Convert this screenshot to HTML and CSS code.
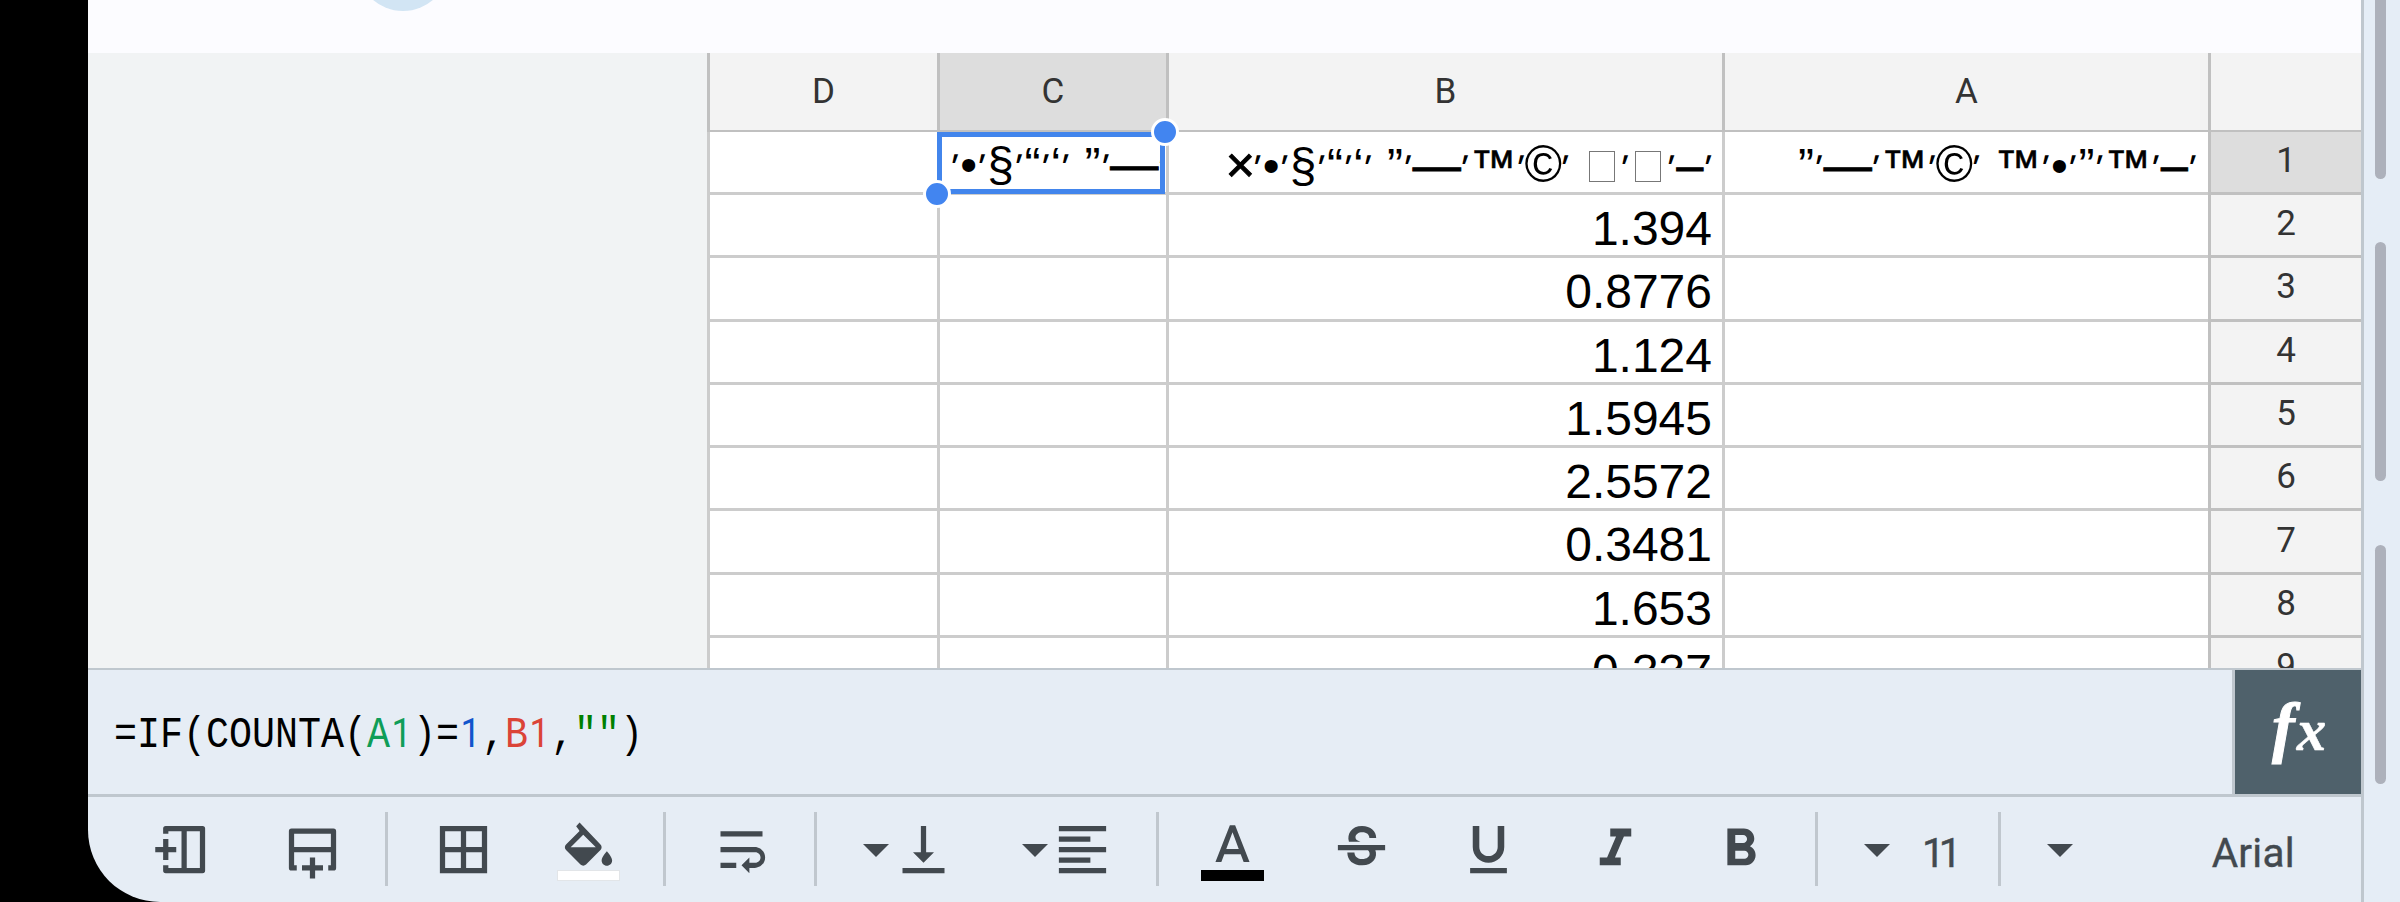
FILE: index.html
```html
<!DOCTYPE html>
<html lang="en">
<head>
<meta charset="utf-8">
<title>Spreadsheet</title>
<link rel="stylesheet" href="styles.css">
</head>
<body>
<div class="screen">
  <main class="app">
    <header class="topbar"><span class="bubble"></span></header>

    <section class="sheet">
      <div class="void"></div>
      <div class="grid">
        <div class="head">D</div><div class="head on">C</div><div class="head">B</div><div class="head">A</div><div class="head corner"></div>

        <div class="cell"></div>
        <div class="cell selected"><div class="clip c-clip"><i class="g">׳</i><i class="em">—</i><i class="g">׳</i><i class="q2">”</i><i class="sp"></i><i class="g">׳</i><i class="q1">‘</i><i class="g">׳</i><i class="q2">“</i><i class="g">׳</i><i class="se">§</i><i class="g">׳</i><i class="bu">•</i><i class="g">׳</i></div><div class="ring"></div><span class="knob start"></span><span class="knob end"></span></div>
        <div class="cell"><div class="clip b-clip"><i class="g">׳</i><i class="en">–</i><i class="g">׳</i><i class="tofu"></i><i class="g">׳</i><i class="tofu"></i><i class="sp"></i><i class="g">׳</i><i class="co">©</i><i class="g">׳</i><i class="tm">™</i><i class="g">׳</i><i class="em">—</i><i class="g">׳</i><i class="q2">”</i><i class="sp"></i><i class="g">׳</i><i class="q1">‘</i><i class="g">׳</i><i class="q2">“</i><i class="g">׳</i><i class="se">§</i><i class="g">׳</i><i class="bu">•</i><i class="g">׳</i><i class="ti">×</i></div></div>
        <div class="cell"><div class="clip"><i class="g">׳</i><i class="en">–</i><i class="g">׳</i><i class="tm">™</i><i class="g">׳</i><i class="q2">”</i><i class="g">׳</i><i class="bu">•</i><i class="g">׳</i><i class="tm">™</i><i class="sp"></i><i class="g">׳</i><i class="co">©</i><i class="g">׳</i><i class="tm">™</i><i class="g">׳</i><i class="em">—</i><i class="g">׳</i><i class="q2">”</i></div></div>
        <div class="num on">1</div>

        <div class="cell"></div><div class="cell"></div><div class="cell">1.394</div><div class="cell"></div><div class="num">2</div>
        <div class="cell"></div><div class="cell"></div><div class="cell">0.8776</div><div class="cell"></div><div class="num">3</div>
        <div class="cell"></div><div class="cell"></div><div class="cell">1.124</div><div class="cell"></div><div class="num">4</div>
        <div class="cell"></div><div class="cell"></div><div class="cell">1.5945</div><div class="cell"></div><div class="num">5</div>
        <div class="cell"></div><div class="cell"></div><div class="cell">2.5572</div><div class="cell"></div><div class="num">6</div>
        <div class="cell"></div><div class="cell"></div><div class="cell">0.3481</div><div class="cell"></div><div class="num">7</div>
        <div class="cell"></div><div class="cell"></div><div class="cell">1.653</div><div class="cell"></div><div class="num">8</div>
        <div class="cell"></div><div class="cell"></div><div class="cell">0.337</div><div class="cell"></div><div class="num">9</div>
      </div>
    </section>

    <section class="formula">
      <div class="expr"><span class="expr-text">=IF(COUNTA(<span class="green">A<b class="one">1</b></span>)=<span class="blue"><b class="one">1</b></span>,<span class="red">B<b class="one">1</b></span>,<span class="str">""</span>)</span></div>
      <div class="fx"><span class="f">f</span><span class="x">x</span></div>
    </section>

    <nav class="toolbar">
      <svg class="icon i-col line" viewBox="0 0 24 24"><path d="M6 6V4h14v16H6v-2M13 4v16M2 12h8M6 8v8"/></svg>
      <svg class="icon i-row line" viewBox="0 0 24 24"><path d="M6 19H4V5h16v14h-2M4 12h16M12 15v8M8 19h8"/></svg>
      <span class="sep s1"></span>
      <svg class="icon i-borders" viewBox="0 0 24 24"><path d="M3 3v18h18V3H3zm8 16H5v-6h6v6zm0-8H5V5h6v6zm8 8h-6v-6h6v6zm0-8h-6V5h6v6z"/></svg>
      <div class="swatch fill">
        <svg class="icon" viewBox="0 0 24 24"><path d="M16.56 8.94L8.6.6 7.3 2l1.2 1.6v.3L3.44 8.94c-.59.59-.59 1.54 0 2.12l5.5 5.5c.29.29.68.44 1.06.44s.77-.15 1.06-.44l5.5-5.5c.59-.58.59-1.53 0-2.12zM5.21 10L10 5.21 14.79 10H5.21zM19 11.5s-2 2.17-2 3.5c0 1.1.9 2 2 2s2-.9 2-2c0-1.33-2-3.5-2-3.5z"/></svg>
        <span class="bar white"></span>
      </div>
      <span class="sep s2"></span>
      <svg class="icon i-wrap" viewBox="0 0 24 24"><path d="M4 19h6v-2H4v2zM20 5H4v2h16V5zm-3 6H4v2h13.25c1.1 0 2 .9 2 2s-.9 2-2 2H15v-2l-3 3 3 3v-2h2c2.21 0 4-1.79 4-4s-1.79-4-4-4z"/></svg>
      <span class="sep s3"></span>
      <svg class="caret a1" viewBox="0 0 10 5"><path d="M0 0l5 5 5-5z"/></svg>
      <svg class="icon i-valign" viewBox="0 0 24 24"><path d="M16 13h-3V3h-2v10H8l4 4 4-4zM4 19v2h16v-2H4z"/></svg>
      <svg class="caret a2" viewBox="0 0 10 5"><path d="M0 0l5 5 5-5z"/></svg>
      <svg class="icon i-valign" viewBox="0 0 24 24"><path d="M15 15H3v2h12v-2zm0-8H3v2h12V7zM3 13h18v-2H3v2zm0 8h18v-2H3v2zM3 3v2h18V3H3z"/></svg>
      <span class="sep s4"></span>
      <div class="swatch color">
        <svg class="icon" viewBox="0 0 24 24"><path d="M11 2L5.5 16h2.25l1.12-3h6.25l1.12 3h2.25L13 2h-2zm-1.38 9L12 4.67 14.38 11H9.62z"/></svg>
        <span class="bar black"></span>
      </div>
      <svg class="icon i-strike" viewBox="0 0 24 24"><path d="M3 10.300h18v2H3zM7.200 9C6.400 6 8.200 3 12.200 3c3.300 0 5.400 1.900 5.400 4.600H15c0-1.300-1-2.200-2.700-2.200-1.500 0-2.600.8-2.600 1.900 0 .8.600 1.300 1.900 1.700zM14 12h3.200c1.200 3-.8 6-4.900 6-3.500 0-5.700-1.900-5.700-4.900h2.700c.1 1.600 1.200 2.500 3 2.500 1.700 0 2.800-.8 2.800-1.900 0-.8-.4-1.300-1.100-1.700z"/></svg>
      <svg class="icon i-under" viewBox="0 0 24 24"><path d="M12 17c3.310 0 6-2.690 6-6V3h-2.500v8c0 1.930-1.570 3.500-3.500 3.500S8.500 12.930 8.500 11V3H6v8c0 3.310 2.690 6 6 6zm-7 2v2h14v-2H5z"/></svg>
      <svg class="icon i-italic" viewBox="0 0 24 24"><path d="M10 4v3h2.210l-3.420 8H6v3h8v-3h-2.210l3.420-8H18V4z"/></svg>
      <svg class="icon i-bold" viewBox="0 0 24 24"><path d="M15.600 10.790c.97-.67 1.650-1.770 1.650-2.790 0-2.260-1.750-4-4-4H7v14h7.040c2.090 0 3.710-1.700 3.710-3.790 0-1.520-.86-2.820-2.150-3.420zM10 6.500h3c.83 0 1.500.67 1.500 1.500s-.67 1.500-1.500 1.500h-3v-3zm3.500 9H10v-3h3.500c.83 0 1.500.67 1.500 1.500s-.67 1.500-1.500 1.500z"/></svg>
      <span class="sep s5"></span>
      <svg class="caret a3" viewBox="0 0 10 5"><path d="M0 0l5 5 5-5z"/></svg>
      <span class="label size">11</span>
      <span class="sep s6"></span>
      <svg class="caret a4" viewBox="0 0 10 5"><path d="M0 0l5 5 5-5z"/></svg>
      <span class="label font">Arial</span>
    </nav>
  </main>

  <aside class="rail">
    <span class="thumb t1"></span><span class="thumb t2"></span><span class="thumb t3"></span>
  </aside>
</div>
</body>
</html>
```
FILE: styles.css
```css
* { box-sizing: border-box; }
body { margin: 0; background: #000; font-family: Roboto, sans-serif; }

.screen { display: flex; width: 2400px; height: 902px; padding-left: 88px; overflow: hidden; background: #000; }
.app { display: flex; flex-direction: column; width: 2273px; height: 902px; overflow: hidden; background: #e6edf5; border-bottom-left-radius: 72px; }

.topbar { position: relative; height: 53px; flex: none; background: #fcfcff; overflow: hidden; }
.bubble { position: absolute; left: 269px; top: -81px; width: 92px; height: 92px; border-radius: 50%; background: #d2e5f4; }

.sheet { display: flex; height: 615px; flex: none; overflow: hidden; }
.void { width: 619px; background: #f1f3f4; flex: none; }
.grid { display: grid; width: 1654px; grid-template-columns: 230px 229px 556px 486px 153px; grid-template-rows: 79px 63px repeat(8, 63.3px); }
.head, .num { background: #f3f3f3; color: #333; font-size: 35px; display: flex; align-items: center; justify-content: center; }
.head { border-left: 3px solid #c0c0c0; border-bottom: 2px solid #c0c0c0; line-height: 40px; padding-top: 1px; padding-bottom: 1px; }
.num { border-left: 3px solid #c0c0c0; border-bottom: 3px solid #c0c0c0; padding-bottom: 3px; }
.head.on, .num.on { background: #ddd; }
.cell { position: relative; min-width: 0; background: #fff; border-left: 3px solid #ccc; border-bottom: 3px solid #ccc; color: #000; font: 48px/60px "Liberation Sans", Arial, sans-serif; text-align: right; padding: 4px 10px 0 0; white-space: nowrap; }

/* Right-to-left run of glyphs, each centred in its own advance width. */
.clip { display: flex; direction: rtl; justify-content: flex-start; align-items: baseline; margin-top: -4px; height: 63px; line-height: 66px; overflow: hidden; }
.b-clip { margin-right: -1.5px; }
.c-clip { justify-content: flex-end; margin-left: 2px; padding-left: 8px; width: 218px; }
.clip i { flex: none; display: flex; justify-content: center; font-style: normal; }
.clip .g { width: 10.3px; font-size: 28px; font-weight: bold; position: relative; top: -4px; }
.clip .en { width: 26.7px; -webkit-text-stroke: 1px #000; }
.clip .em { width: 46.5px; -webkit-text-stroke: 1px #000; }
.clip .co { width: 34px; font-size: 51px; }
.clip .tm { width: 45.8px; font-size: 46px; -webkit-text-stroke: .6px #000; }
.clip .q1 { width: 9.5px; }
.clip .q2 { width: 16.5px; }
.clip .se { width: 26.6px; }
.clip .bu { width: 16.8px; }
.clip .ti { width: 24px; font-size: 50px; -webkit-text-stroke: 1px #000; }
.clip .sp { width: 13.3px; }
.clip .tofu { width: 26px; height: 31px; margin: 0 5px; border: 1px solid #777; }

.ring { position: absolute; left: -3px; top: 0; width: 228px; height: 62px; border: 5px solid #4285ec; }
.knob { position: absolute; width: 28px; height: 28px; border-radius: 50%; border: 3px solid #fff; background: #4285f0; z-index: 2; }
.knob.start { left: 211px; top: -14px; }
.knob.end { left: -17px; top: 48px; }

.formula { display: flex; height: 129px; flex: none; border-top: 2px solid #bfc7ce; border-bottom: 3px solid #bfc7ce; }
.expr { flex: 1; padding: 5px 0 0 26px; display: flex; align-items: center; }
.expr-text { font: 44px/60px "Liberation Mono", monospace; color: #000; white-space: pre; transform: scaleX(.871); transform-origin: left center; }
.one { display: inline-block; width: 26.4px; font: 41px/50px Roboto, sans-serif; text-align: center; }
.green { color: #0f9d58; }
.blue { color: #1155cc; }
.red { color: #db4437; }
.str { color: #008000; }
.fx { width: 129px; border-left: 3px solid #bfc7ce; background: #4f616b; color: #fff; font-family: "Liberation Serif", serif; font-style: italic; font-weight: bold; display: flex; align-items: baseline; padding: 17px 0 0 37px; line-height: 80px; }
.f { font-size: 68px; -webkit-text-stroke: 1px #fff; }
.x { font-size: 59px; margin-left: 2px; -webkit-text-stroke: .5px #fff; }

.toolbar { display: flex; align-items: flex-start; flex: 1; padding-top: 21px; }
.toolbar > * { flex: none; }
.icon { display: block; width: 63px; height: 63px; fill: #42494f; }
.line { fill: none; stroke: #42494f; stroke-width: 2; stroke-linejoin: round; overflow: visible; }
.sep { width: 3px; height: 74px; margin-top: -6px; background: #c0c7ce; }
.caret { width: 26px; height: 13px; margin-top: 26px; fill: #42494f; }
.i-col { margin-left: 61.5px; }
.i-row { margin-left: 68.7px; }
.s1 { margin-left: 40.8px; }
.i-borders { margin-left: 44px; }
.swatch { width: 63px; display: flex; flex-direction: column; }
.fill { margin-left: 62px; padding-top: 3px; }
.bar { height: 11px; margin-top: -14px; }
.white { background: #fff; border: 1px solid #e2e5e8; }
.black { background: #000; }
.s2 { margin-left: 43px; }
.i-wrap { margin-left: 43.7px; }
.s3 { margin-left: 41.3px; }
.a1 { margin-left: 46px; }
.i-valign { margin-left: 3px; }
.a2 { margin-left: 67px; }
.s4 { margin-left: 42px; }
.color { margin-left: 42px; padding-top: 2px; }
.color .bar { margin-top: -13px; }
.i-strike { margin-left: 66px; }
.i-under { margin-left: 64px; }
.i-italic { margin-left: 64px; }
.i-bold { margin-left: 62px; }
.s5 { margin-left: 43px; }
.a3 { margin-left: 46px; }
.label { color: #42494f; font-size: 40.5px; line-height: 46px; margin-top: 12px; -webkit-text-stroke: .4px #42494f; }
.size { width: 30px; margin-left: 32px; letter-spacing: -6px; }
.s6 { margin-left: 46px; }
.a4 { margin-left: 46px; }
.font { margin-left: auto; margin-right: 66px; letter-spacing: .3px; }

.rail { display: flex; flex-direction: column; width: 39px; flex: none; border-left: 3px solid #bfc7ce; background: #e5edf6; padding-left: 11px; }
.thumb { width: 11px; flex: none; border-radius: 6px; background: #adb1bb; }
.t1 { height: 179px; border-top-left-radius: 0; border-top-right-radius: 0; }
.t2 { height: 239px; margin-top: 63px; }
.t3 { height: 239px; margin-top: 64px; }
```
